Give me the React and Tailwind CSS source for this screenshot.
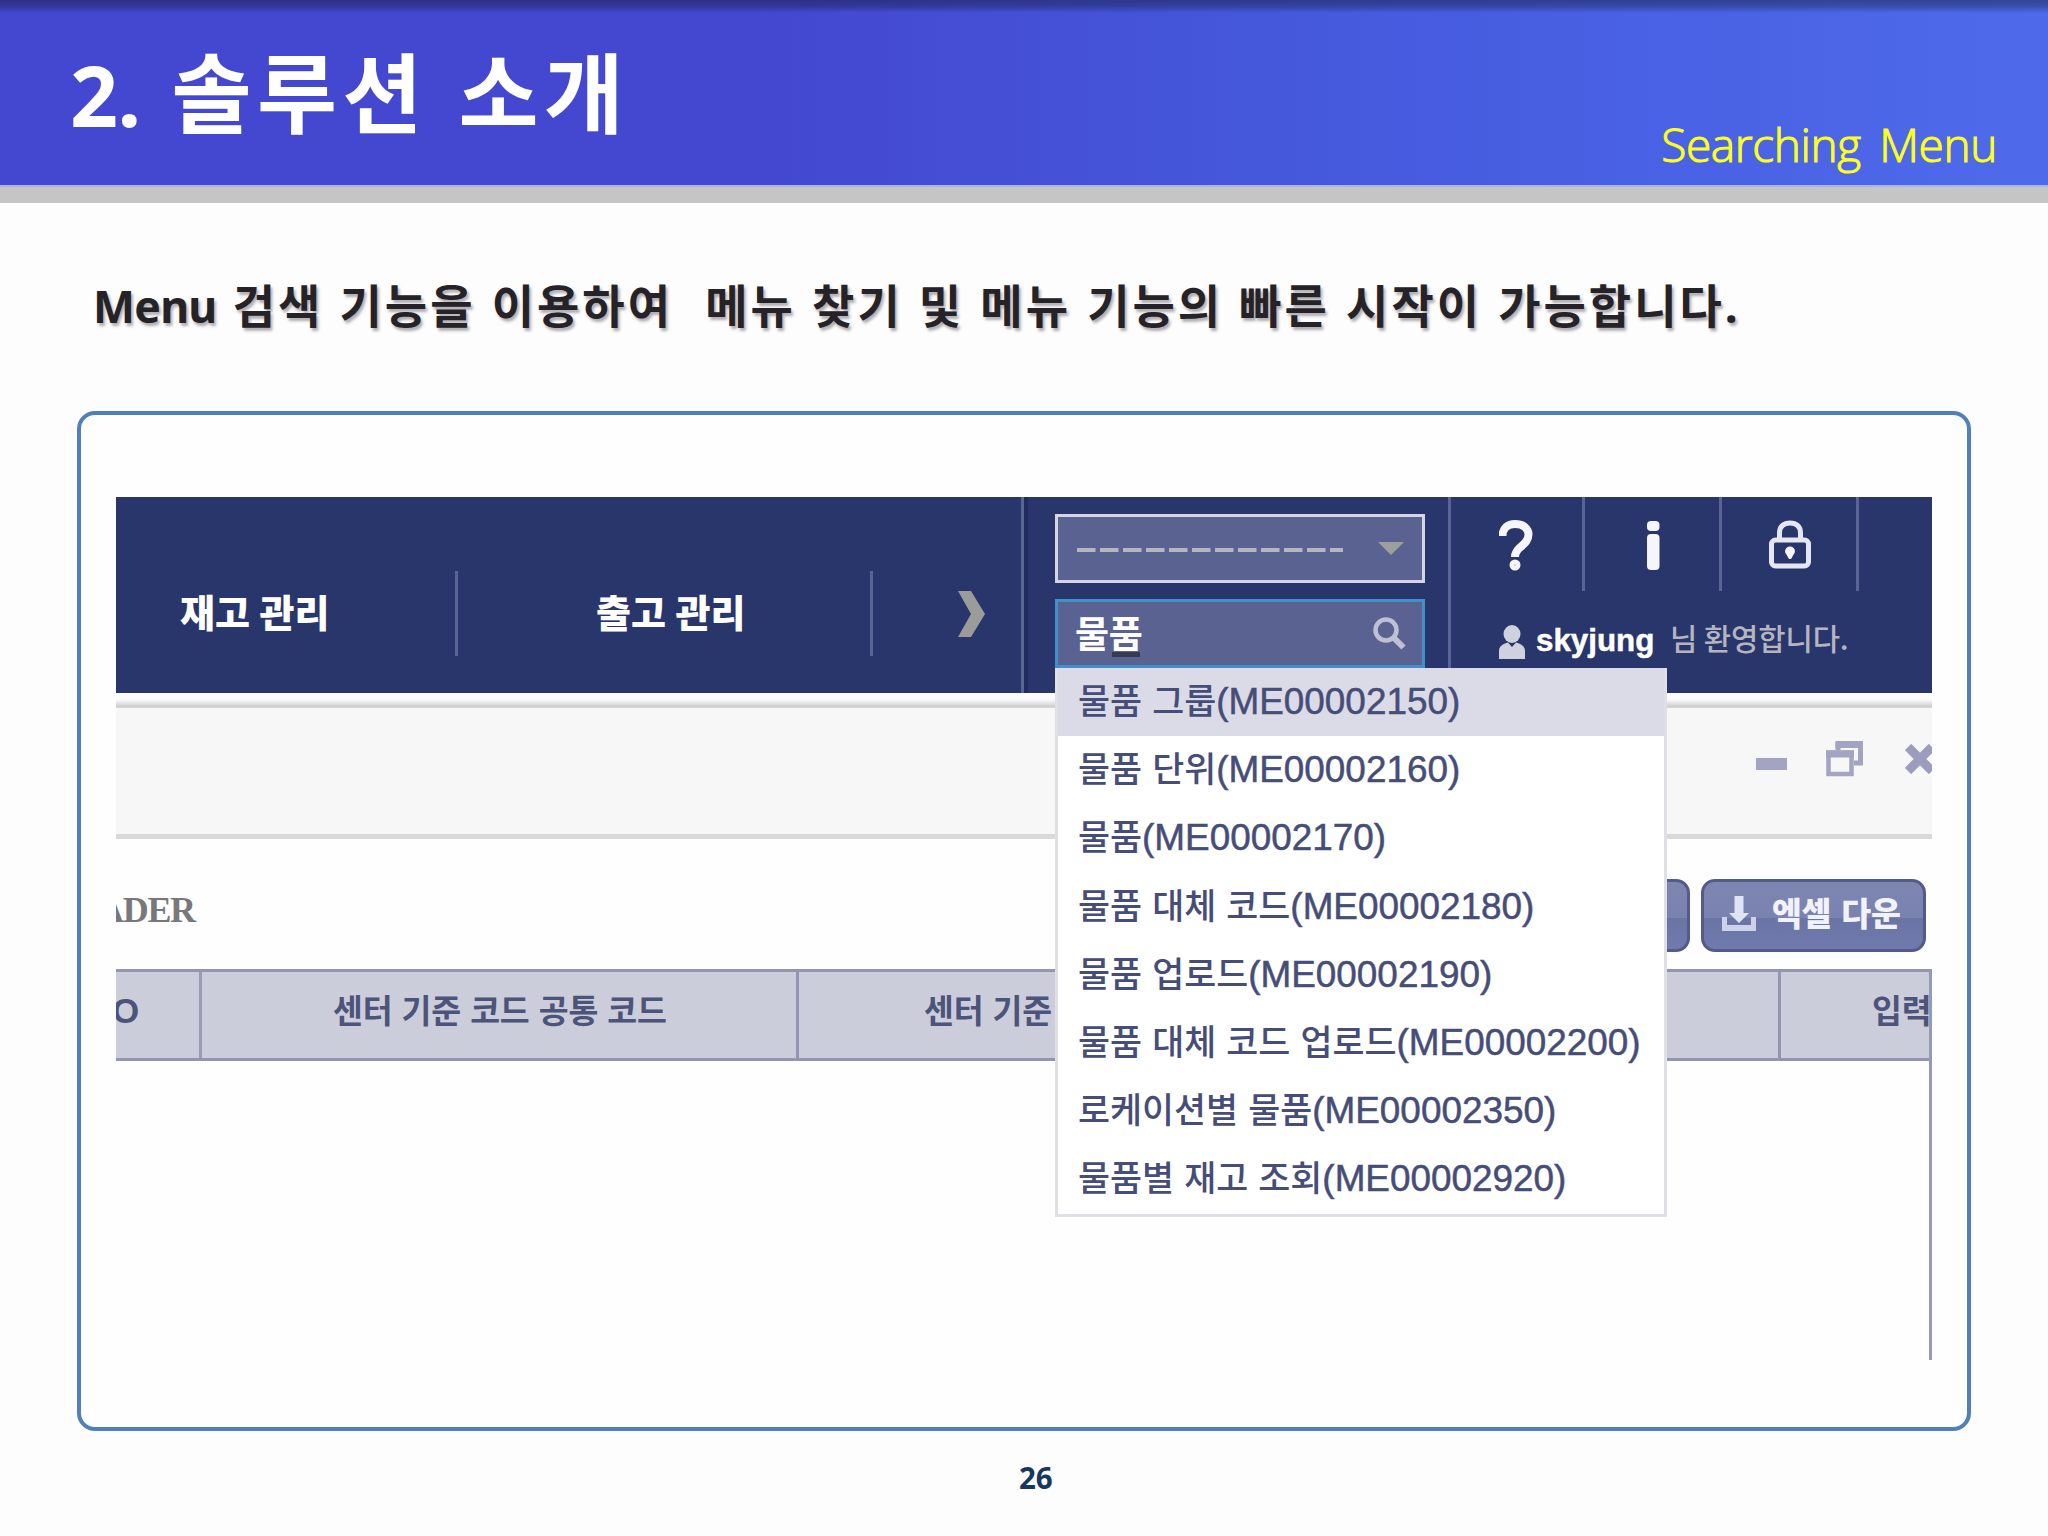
const menuItems = [
  ["물품 그룹", "(ME00002150)"],
  ["물품 단위", "(ME00002160)"],
  ["물품", "(ME00002170)"],
  ["물품 대체 코드", "(ME00002180)"],
  ["물품 업로드", "(ME00002190)"],
  ["물품 대체 코드 업로드", "(ME00002200)"],
  ["로케이션별 물품", "(ME00002350)"],
  ["물품별 재고 조회", "(ME00002920)"],
];

function SlideHeader() {
  return (
    <header className="relative h-[203px] border-b-[16px] border-[#c5c5c5] bg-[linear-gradient(90deg,#4448d0_0%,#4448d0_38%,#4558dc_62%,#4961e4_80%,#4e6aea_100%)] flex justify-between pl-[70px] pr-[51px]">
      <div className="absolute inset-x-0 top-0 h-[13px] bg-gradient-to-b from-black/35 via-black/25 to-transparent" />
      <div className="absolute inset-x-0 bottom-0 h-[2px] bg-[#a9b4ea]" />
      <h1 className="mt-[43px] h-[100px] leading-[100px] whitespace-pre text-[87px] font-bold text-white tracking-[5.3px] [word-spacing:3px] font-['Noto_Sans','Noto_Sans_CJK_KR',sans-serif]">
        <span className="text-[84px] tracking-[-0.5px]">2.</span> 솔루션 소개
      </h1>
      <p className="mt-[114px] h-[60px] leading-[60px] whitespace-pre text-[46px] font-light text-[#ffff1a] tracking-[-0.4px] [word-spacing:7px] [-webkit-text-stroke:1px_#ffff1a] font-['Open_Sans',sans-serif]">
        Searching Menu
      </p>
    </header>
  );
}

function NavBar() {
  return (
    <div className="flex h-[196px] bg-[#29366c] text-white">
      <div className="flex w-[905px] shrink-0 font-['Noto_Sans_CJK_KR',sans-serif] font-black text-[38px] leading-[50px] tracking-[0px] [word-spacing:1px]">
        <div className="w-[342px] h-[85px] mt-[74px] border-r-[3px] border-[#586494] pl-[64px] pt-[15px] whitespace-nowrap">재고 관리</div>
        <div className="w-[415px] h-[85px] mt-[74px] border-r-[3px] border-[#586494] pl-[138px] pt-[15px] whitespace-nowrap">출고 관리</div>
        <svg className="ml-[85px] mt-[94px]" width="27" height="46" viewBox="0 0 27 46">
          <path d="M0 0H13L27 23L13 46H0L13 23Z" fill="#9b9c99" />
        </svg>
      </div>
      <div className="w-[7px] shrink-0 border-l-[3px] border-[#586494] bg-[#202c5c]" />
      <div className="flex w-[420px] shrink-0 flex-col gap-4 pl-[27px] pt-[17px]">
        <div className="flex h-[69px] w-[370px] items-center justify-between border-[3px] border-[#d5d5e2] bg-[#5a6291] pl-[19px] pr-[18px]">
          <svg className="mt-[2px]" width="266" height="4" viewBox="0 0 266 4">
            <path d="M0 2H266" stroke="#b5b7c0" strokeWidth="4" strokeDasharray="18.5 4.5" />
          </svg>
          <svg width="26" height="13" viewBox="0 0 26 13"><path d="M0 0H26L13 13Z" fill="#9ba09c" /></svg>
        </div>
        <div className="flex h-[69px] w-[370px] items-center justify-between border-[3px] border-[#4190ca] bg-[#5a6291] pl-[17px] pr-[16px]">
          <span className="relative text-[37px] font-bold leading-[60px] -mt-[4px] tracking-[-0.3px] font-['Noto_Sans_CJK_KR',sans-serif]">
            물품
            <span className="absolute bottom-[5px] right-[2px] h-[5px] w-[28px] bg-[#363b50]" />
          </span>
          <svg width="33" height="33" viewBox="0 0 33 33" fill="none" stroke="#bdc1d3">
            <circle cx="13" cy="13" r="10.5" strokeWidth="4.500" />
            <path d="M20.500 20.500L30.500 30.500" strokeWidth="6" />
          </svg>
        </div>
      </div>
      <div className="min-w-0 flex-1 border-l-[3px] border-[#586494]">
        <div className="flex h-[94px]">
          <div className="w-[134px] border-r-[3px] border-[#586494] pl-[48px] pt-[23px]">
            <svg width="34" height="51" viewBox="0 0 34 51" fill="none" stroke="#f5f6fb">
              <path d="M3.500 16C3.500 8 9 4 16 4C25 4 29.500 9 29.500 14.500C29.500 21 25 24 21 27.500C17.500 30.500 16 33 16 37" strokeWidth="8" />
              <circle cx="16" cy="45" r="3" strokeWidth="5" />
            </svg>
          </div>
          <div className="w-[137px] border-r-[3px] border-[#586494] pl-[62px] pt-[23px]">
            <svg width="13" height="51" viewBox="0 0 13 51" fill="#f5f6fb">
              <rect x="0" y="1" width="12.500" height="10" rx="4" />
              <rect x="0" y="14" width="12.500" height="36" rx="4" />
            </svg>
          </div>
          <div className="w-[137px] border-r-[3px] border-[#586494] pl-[47px] pt-[23px]">
            <svg width="42" height="49" viewBox="0 0 42 49" fill="none" stroke="#e4e7f2">
              <rect x="2.500" y="20" width="37" height="26" rx="4" strokeWidth="5" />
              <path d="M10.500 19V13C10.500 6 15 3 21 3S31.500 6 31.500 13V19" strokeWidth="5" />
              <path d="M21 26.500a5 5 0 0 1 5 5c0 2-2 3-2.500 5L22 39H20L18.500 36.500c-.5-2-2.500-3-2.500-5a5 5 0 0 1 5-5Z" fill="#f5f6fb" stroke="none" />
            </svg>
          </div>
        </div>
        <div className="flex pl-[48px] pt-[32px]">
          <svg className="mt-[2px] shrink-0" width="26" height="34" viewBox="0 0 26 34" fill="#cfd2de">
            <ellipse cx="13" cy="9" rx="8.500" ry="9" />
            <path d="M0 34V26C0 21 4 19 9 17.500L13 22L17 17.500C22 19 26 21 26 26V34Z" />
          </svg>
          <span className="-mt-[2px] ml-[11px] w-[134px] shrink-0 whitespace-nowrap text-[31.300px] font-bold leading-[40px] [-webkit-text-stroke:0.5px_white] font-['Liberation_Sans',sans-serif]">skyjung</span>
          <span className="-mt-[5px] whitespace-nowrap text-[29.700px] font-medium leading-[40px] text-[#b4b5be] tracking-[-0.1px] font-['Noto_Sans_CJK_KR',sans-serif]">님 환영합니다.</span>
        </div>
      </div>
    </div>
  );
}

function WindowBar() {
  return (
    <>
      <div className="h-[15px] bg-[linear-gradient(180deg,#ffffff_0%,#fafafa_45%,#cfcfcf_90%,#d8d8d8_100%)]" />
      <div className="flex h-[131px] items-start border-b-[5px] border-[#d9d9d9] bg-[#f7f7f8] pl-[1640px]">
        <svg className="mt-[50px] shrink-0" width="31" height="12" viewBox="0 0 31 12"><rect width="31" height="12" fill="#a3a3c2" /></svg>
        <svg className="ml-[39px] mt-[33px] shrink-0" width="38" height="36" viewBox="0 0 38 36" fill="none" stroke="#a3a3c2">
          <path d="M12 9V4H34.500V22H28" strokeWidth="5" />
          <path d="M9.500 3.500H37" strokeWidth="7" />
          <rect x="2.500" y="11.500" width="23" height="21.500" strokeWidth="4.500" />
          <path d="M0 13H28" strokeWidth="7" />
        </svg>
        <svg className="ml-[41px] mt-[36px] shrink-0" width="30" height="30" viewBox="0 0 30 30" fill="none" stroke="#9c9cbd" strokeWidth="9">
          <path d="M3 3L27 27M27 3L3 27" />
        </svg>
      </div>
    </>
  );
}

const buttonLook = "h-[73px] rounded-[14px] border-[3px] border-[#545b8c] bg-[linear-gradient(180deg,#7d86b1_0%,#7a83af_53%,#6a74a5_54%,#717aac_100%)]";

function Toolbar() {
  return (
    <div className="flex h-[130px] items-start">
      <div className="w-[1400px] pt-[46px]">
        <span className="-ml-[18px] inline-block whitespace-nowrap text-[36px] font-bold leading-[50px] tracking-[-1.300px] text-[#78787c] font-['Liberation_Serif',serif]">ADER</span>
      </div>
      <div className={buttonLook + " mt-[40px] w-[174px] shrink-0"} />
      <div className={buttonLook + " ml-[11px] mt-[40px] flex w-[225px] shrink-0 pl-[18px]"}>
        <svg className="mt-[14px] shrink-0" width="34" height="35" viewBox="0 0 34 35" fill="#dfe3f4">
          <path d="M12.500 0H21.500V17H27L17 27L7 17H12.500Z" />
          <path d="M0 21H5V29H29V21H34V35H0Z" fill="#cdd2ea" />
        </svg>
        <span className="ml-[16px] whitespace-nowrap text-[32.500px] font-black leading-[60px] text-[#f1f2fb] tracking-[-0.3px] [word-spacing:3px] font-['Noto_Sans_CJK_KR',sans-serif]">엑셀 다운</span>
      </div>
    </div>
  );
}

function Grid() {
  return (
    <div className="flex h-[392px] flex-col border-r-[3px] border-[#9698b8]">
      <div className="flex h-[92px] border-y-[3px] border-[#9495b4] bg-[#cccddb] text-[32.500px] font-bold leading-[50px] text-[#4d5479] tracking-[-0.200px] [word-spacing:2px] font-['Noto_Sans_CJK_KR',sans-serif]">
        <div className="w-[86px] shrink-0 border-r-[3px] border-[#9a9bb5] pt-[12px]">
          <span className="-ml-[4px] text-[35px] font-['Liberation_Sans',sans-serif]">O</span>
        </div>
        <div className="w-[597px] shrink-0 whitespace-nowrap border-r-[3px] border-[#9495b4] pl-[131px] pt-[12px]">센터 기준 코드 공통 코드</div>
        <div className="w-[982px] shrink-0 whitespace-nowrap border-r-[3px] border-[#9495b4] pl-[125px] pt-[12px]">센터 기준</div>
        <div className="min-w-0 flex-1 overflow-hidden whitespace-nowrap pl-[91px] pt-[12px]">입력</div>
      </div>
    </div>
  );
}

function SearchResults() {
  return (
    <ul className="absolute left-[939px] top-[171px] h-[549px] w-[612px] border-x-[3px] border-b-[3px] border-[#dfdfe6] bg-white text-[#454d78]">
      {menuItems.map(([name, code], i) => (
        <li key={code} className={(i === 0 ? "bg-[#dadbe7] " : "") + "flex h-[68.200px] items-baseline whitespace-nowrap pl-[20px] leading-[62px]"}>
          <span className="text-[34.800px] font-medium [word-spacing:2.300px] font-['Noto_Sans_CJK_KR',sans-serif]">{name}</span>
          <span className="text-[36.900px] [-webkit-text-stroke:0.500px_#454d78] font-['Liberation_Sans',sans-serif]">{code}</span>
        </li>
      ))}
    </ul>
  );
}

export default function App() {
  return (
    <div className="h-[1536px] w-[2048px] overflow-hidden bg-[#fdfdfe]">
      <SlideHeader />
      <p className="ml-[93px] mt-[72px] h-[60px] whitespace-pre text-[46px] font-bold leading-[60px] text-[#252328] tracking-[3px] [word-spacing:1.200px] [text-shadow:2px_3px_3px_rgba(60,50,60,0.4)] font-['Noto_Sans','Noto_Sans_CJK_KR',sans-serif]">
        <span className="text-[44.500px] tracking-[-0.700px]">Menu</span>
        {" 검색 기능을 이용하여  메뉴 찾기 및 메뉴 기능의 빠른 시작이 가능합니다."}
      </p>
      <main className="ml-[77px] mt-[76px] h-[1020px] w-[1894px] rounded-[18px] border-[4px] border-[#5080bb] bg-[#fefefe] pl-[35px] pt-[82px]">
        <div className="relative h-[863px] w-[1816px]">
          <div className="h-[863px] overflow-hidden bg-[#fefefe]">
            <NavBar />
            <WindowBar />
            <Toolbar />
            <Grid />
          </div>
          <SearchResults />
        </div>
      </main>
      <p className="ml-[1019px] mt-[27px] text-[29.500px] font-bold leading-[40px] text-[#17375e] font-['Noto_Sans',sans-serif]">26</p>
    </div>
  );
}
